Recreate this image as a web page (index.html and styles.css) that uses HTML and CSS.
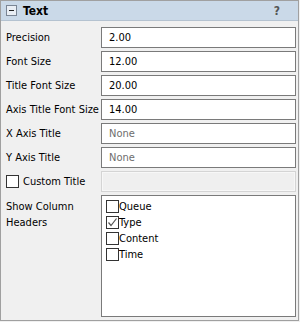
FILE: index.html
```html
<!DOCTYPE html>
<html>
<head>
<meta charset="utf-8">
<link rel="stylesheet" href="styles.css">
</head>
<body>
<div class="panel">
  <div class="header">
    <span class="toggle"><span class="minus"></span></span>
    <span class="title">Text</span>
    <span class="help">?</span>
  </div>
  <div class="form">
    <label class="lbl">Precision</label>
    <div class="field">2.00</div>
    <label class="lbl">Font Size</label>
    <div class="field">12.00</div>
    <label class="lbl">Title Font Size</label>
    <div class="field">20.00</div>
    <label class="lbl">Axis Title Font Size</label>
    <div class="field">14.00</div>
    <label class="lbl">X Axis Title</label>
    <div class="field placeholder">None</div>
    <label class="lbl">Y Axis Title</label>
    <div class="field placeholder">None</div>
    <label class="lbl check-lbl"><span class="box"></span>Custom Title</label>
    <div class="field disabled"></div>
    <label class="lbl top">Show Column Headers</label>
    <div class="list">
      <div class="item"><span class="box"></span>Queue</div>
      <div class="item"><span class="box"><svg width="11" height="11" viewBox="0 0 11 11"><path d="M1.5 5.5 L4 8.5 L9.5 1.5" fill="none" stroke="#555" stroke-width="1.2"/></svg></span>Type</div>
      <div class="item"><span class="box"></span>Content</div>
      <div class="item"><span class="box"></span>Time</div>
    </div>
  </div>
</div>
</body>
</html>
```
FILE: styles.css
```css
html, body {
  margin: 0;
  padding: 0;
  background: #f0f0f0;
}
.panel {
  width: 299px;
  height: 321px;
  box-sizing: border-box;
  border: 1px solid #a0a0a0;
  background: #f0f0f0;
  font-family: "DejaVu Sans Condensed", "DejaVu Sans", sans-serif;
  font-stretch: condensed;
  font-size: 11px;
  color: #000;
}
.header {
  height: 19px;
  background: #cad9e8;
  border-bottom: 1px solid #b4c2d0;
  display: flex;
  align-items: center;
  padding: 0 0 0 5px;
}
.toggle {
  width: 9px;
  height: 9px;
  border: 1px solid #7a8594;
  background: #e9eef4;
  display: flex;
  align-items: center;
  justify-content: center;
}
.minus {
  width: 5px;
  height: 1px;
  background: #222;
}
.title {
  font-weight: bold;
  font-size: 12px;
  margin-left: 6px;
  flex: 1;
}
.help {
  font-weight: bold;
  color: #555;
  font-size: 12px;
  margin-right: 18px;
}
.form {
  display: grid;
  grid-template-columns: 95px 195px;
  row-gap: 3px;
  padding: 6px 0 0 5px;
}
.lbl {
  display: flex;
  align-items: center;
  height: 21px;
  white-space: nowrap;
}
.lbl.top {
  align-items: flex-start;
  height: auto;
  padding-top: 4px;
  line-height: 16px;
  white-space: normal;
}
.field {
  height: 21px;
  box-sizing: border-box;
  border: 1px solid #7a7a7a;
  background: #fff;
  display: flex;
  align-items: center;
  padding-left: 7px;
}
.field.placeholder {
  color: #6d6d6d;
}
.field.disabled {
  background: #efefef;
  border-color: #d4d4d4;
  box-shadow: inset 0 0 0 1px #f7f7f7;
}
.box {
  width: 11px;
  height: 11px;
  border: 1px solid #333;
  background: #fff;
  display: inline-flex;
  align-items: center;
  justify-content: center;
  margin-right: 4px;
  flex: none;
}
.list {
  height: 122px;
  box-sizing: border-box;
  border: 1px solid #7a7a7a;
  background: #fff;
  padding: 2px 0 0 4px;
}
.item {
  display: flex;
  align-items: center;
  height: 16px;
}
.item .box {
  margin-right: 0;
}
```
